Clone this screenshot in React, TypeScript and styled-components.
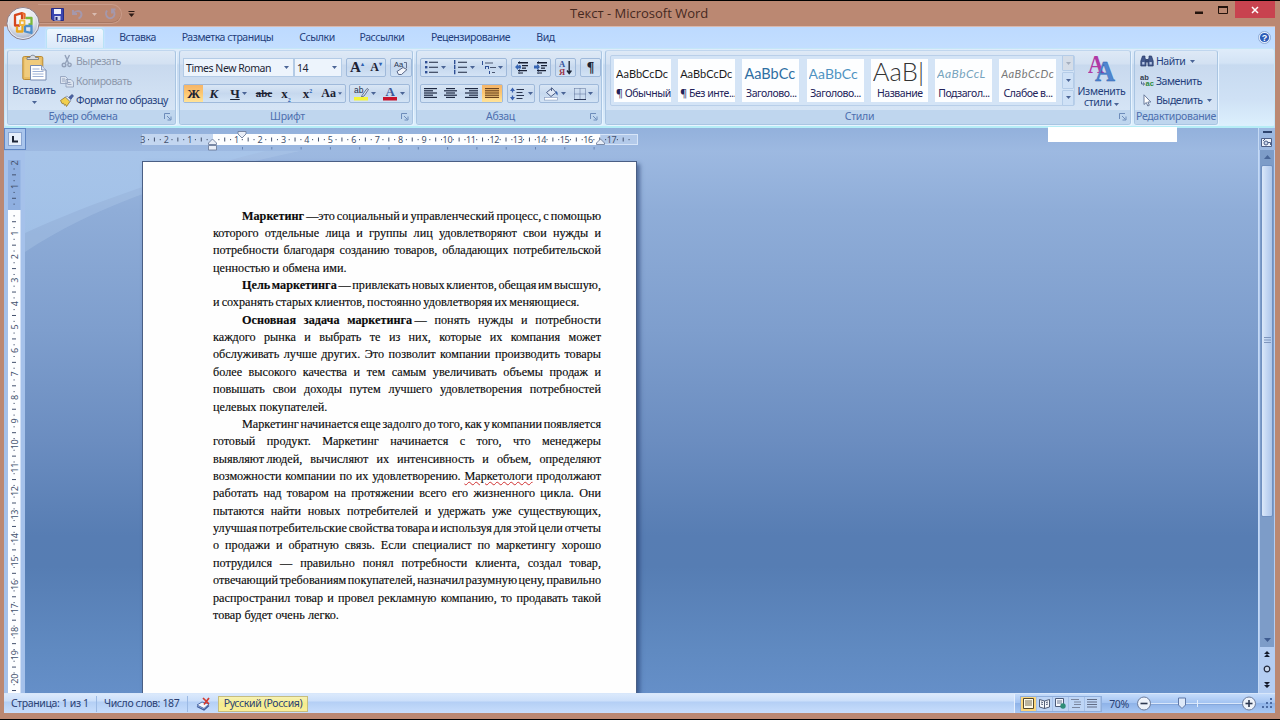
import React from 'react';
import styled, { createGlobalStyle, css } from 'styled-components';

const Global = createGlobalStyle`
  * { box-sizing: border-box; }
  html, body { margin: 0; padding: 0; overflow: hidden; background: #000; }
  body { font-family: "Noto Sans", "Open Sans", sans-serif; font-size: 10.5px; letter-spacing: -0.45px; color: #24407c; }
  svg { letter-spacing: 0; }
`;

/* ---------- window ---------- */
const Window = styled.div`
  position: relative;
  width: 1280px;
  height: 720px;
  display: flex;
  flex-direction: column;
  background: #bb8872;
  border-top: 1px solid #000;
  border-bottom: 1px solid #000;
  overflow: hidden;
`;
const TitleBar = styled.header`
  flex: none;
  height: 25px;
  display: flex;
  align-items: flex-start;
  padding-left: 38px;
`;
const QuickAccess = styled.div`
  width: 84px;
  height: 20px;
  margin-top: 3px;
  border: 1px solid #c99b89;
  border-left: none;
  border-radius: 0 10px 10px 0;
  box-shadow: inset 0 -1px 0 #a87763;
  display: flex;
  align-items: center;
  padding-left: 13px;
  gap: 8px;
`;
const TitleText = styled.h1`
  flex: 1;
  margin: 0;
  padding-left: 435px;
  font-family: "Open Sans", sans-serif;
  font-size: 13px;
  letter-spacing: 0;
  line-height: 24px;
  font-weight: 400;
  color: #46291f;
  white-space: nowrap;
`;
const Caption = styled.div`
  display: flex;
  height: 17px;
  padding-right: 5px;
`;
const CaptionButton = styled.button<{ $close?: boolean }>`
  border: 0;
  padding: 0;
  width: ${p => (p.$close ? 40 : 24)}px;
  height: 17px;
  background: ${p => (p.$close ? '#c8434f' : 'transparent')};
  display: flex;
  align-items: center;
  justify-content: center;
`;
const OfficeButton = styled.div`
  position: absolute;
  left: 6px;
  top: 5px;
  width: 34px;
  height: 34px;
`;
const Client = styled.div`
  flex: none;
  height: 687px;
  margin: 0 5px 0 4px;
  display: flex;
  flex-direction: column;
  background: #bfdbff;
`;

/* ---------- tabs ---------- */
const Tabs = styled.nav`
  flex: none;
  height: 22px;
  display: flex;
  align-items: flex-end;
  padding-left: 42px;
  border-top: 1px solid #d9b9ae;
  background: linear-gradient(#bddaff, #c3deff);
`;
const Tab = styled.div<{ $w: number; $active?: boolean }>`
  width: ${p => p.$w}px;
  height: 20px;
  line-height: 19px;
  text-align: center;
  white-space: nowrap;
  ${p => p.$active && css`
    border: 1px solid #b9e3f6;
    border-bottom: 0;
    border-radius: 3px 3px 0 0;
    background: linear-gradient(#eff7ff, #dbe9f9);
    box-shadow: 0 0 2px #d8f4ff;
    line-height: 18px;
  `}
`;
const HelpSlot = styled.div`
  margin-left: auto;
  padding: 0 4px 4px 0;
  line-height: 0;
`;

/* ---------- ribbon ---------- */
const Ribbon = styled.div`
  flex: none;
  height: 80px;
  display: flex;
  gap: 3px;
  padding: 1px 3px 3px 2px;
  border: 1px solid #c5e6f8;
  border-bottom: 2px solid #b5edf6;
  border-radius: 3px;
  background: linear-gradient(#dfecfa 0, #d3e3f5 14px, #c7daf0 16px, #cfe1f5 50px, #dcf0fd 100%);
`;
const Group = styled.section<{ $w: number }>`
  flex: none;
  width: ${p => p.$w}px;
  height: 75px;
  display: flex;
  flex-direction: column;
  border: 1px solid #a9c5e2;
  border-top-color: #c0d6ee;
  border-radius: 3px;
  overflow: hidden;
  box-shadow: 1px 1px 0 #e8f4ff;
  background: linear-gradient(#dee9f6 0, #d3e1f2 13px, #c8d9ee 14px, #d5e4f5 58px);
`;
const GroupBody = styled.div<{ $pad?: string; $col?: boolean; $gap?: number }>`
  flex: 1;
  display: flex;
  flex-direction: ${p => (p.$col ? 'column' : 'row')};
  gap: ${p => p.$gap ?? 0}px;
  padding: ${p => p.$pad ?? '0'};
`;
const GroupCaption = styled.footer<{ $end?: boolean }>`
  flex: none;
  position: relative;
  height: 14px;
  line-height: 13px;
  text-align: center;
  padding-right: ${p => (p.$end ? 0 : 17)}px;
  white-space: nowrap;
  letter-spacing: -0.3px;
  color: #4d6fae;
  background: #bfd6ee;
  svg { position: absolute; right: 3px; top: 3px; }
`;
const BigButton = styled.div<{ $w: number }>`
  flex: none;
  width: ${p => p.$w}px;
  display: flex;
  flex-direction: column;
  align-items: center;
  line-height: 11px;
  white-space: nowrap;
  letter-spacing: -0.3px;
`;
const BigLabel = styled.div`
  margin-top: 4px;
`;
const BigArrow = styled.div`
  margin-top: 4px;
  line-height: 0;
`;
const Commands = styled.div`
  display: flex;
  flex-direction: column;
  gap: 5.5px;
`;
const Command = styled.div<{ $off?: boolean }>`
  display: flex;
  align-items: center;
  gap: 2px;
  height: 14px;
  line-height: 14px;
  white-space: nowrap;
  color: ${p => (p.$off ? '#8d99ac' : '#24407c')};
  svg { flex: none; }
`;
const ToolRow = styled.div<{ $gap?: number }>`
  display: flex;
  gap: ${p => p.$gap ?? 4}px;
  height: 19px;
`;
const Combo = styled.div<{ $w: number }>`
  width: ${p => p.$w}px;
  height: 19px;
  display: flex;
  align-items: center;
  justify-content: space-between;
  padding: 0 4px 0 2px;
  border: 1px solid #b3cbe6;
  background: #edf4fc;
  color: #1c2434;
  white-space: nowrap;
`;
const Tools = styled.div<{ $w: number }>`
  width: ${p => p.$w}px;
  height: 19px;
  display: flex;
  align-items: center;
  justify-content: space-around;
  border: 1px solid #9fb9da;
  border-radius: 2px;
  background: linear-gradient(#d9e6f5, #c6d8ee 50%, #d3e3f5);
`;
const Tool = styled.div<{ $w: number; $on?: boolean }>`
  width: ${p => p.$w}px;
  height: 17px;
  display: flex;
  align-items: center;
  justify-content: center;
  gap: 2px;
  background: ${p => (p.$on ? 'linear-gradient(#f5b56a, #fcc56f 45%, #ffe398)' : 'none')};
`;
const Glyph = styled.span<{ $i?: boolean; $u?: boolean; $s?: boolean; $size?: number }>`
  font-family: "Liberation Serif", serif;
  font-weight: 700;
  font-size: ${p => p.$size ?? 13}px;
  letter-spacing: 0;
  line-height: 15px;
  color: #1c2233;
  font-style: ${p => (p.$i ? 'italic' : 'normal')};
  text-decoration: ${p => (p.$u ? 'underline' : p.$s ? 'line-through' : 'none')};
  sub, sup { font-size: 6px; line-height: 0; color: #2e5fb0; }
`;

/* ---------- style gallery ---------- */
const Gallery = styled.div`
  flex: none;
  width: 465px;
  height: 51px;
  display: flex;
  gap: 7.2px;
  padding: 3px 0 0 3px;
  border: 1px solid #b9cfe9;
  border-radius: 2px;
  background: #d4e4f6;
`;
const Card = styled.div`
  flex: none;
  width: 57px;
  height: 43px;
  display: flex;
  flex-direction: column;
  justify-content: space-between;
  background: #fdfeff;
  overflow: hidden;
  padding: 0 1px 1px 2px;
`;
const Sample = styled.div<{ $c?: string; $size?: number; $i?: boolean; $light?: boolean }>`
  height: 28px;
  line-height: ${p => (p.$light ? 24 : 29)}px;
  overflow: hidden;
  white-space: nowrap;
  font-family: Lato, sans-serif;
  font-size: ${p => p.$size ?? 11}px;
  font-style: ${p => (p.$i ? 'italic' : 'normal')};
  font-weight: ${p => (p.$light ? 300 : 400)};
  color: ${p => p.$c ?? '#1b1b1b'};
  letter-spacing: ${p => (p.$i ? 0.5 : 0)}px;
`;
const CardName = styled.div`
  height: 14px;
  line-height: 13px;
  text-align: center;
  white-space: nowrap;
  color: #23235a;
`;
const GalleryScroll = styled.div`
  flex: none;
  width: 12px;
  height: 51px;
  margin: -4px 0 0 -1px;
  display: flex;
  flex-direction: column;
  gap: 1px;
`;
const ScrollCell = styled.div<{ $off?: boolean }>`
  flex: 1;
  display: flex;
  align-items: center;
  justify-content: center;
  border: 1px solid #b4cce8;
  border-radius: 1px;
  background: ${p => (p.$off ? '#d5dde8' : '#cfe1f6')};
`;

/* ---------- workspace ---------- */
const Work = styled.div`
  position: relative;
  flex: 1;
  min-height: 0;
  display: flex;
`;
const Canvas = styled.div`
  flex: 1;
  display: flex;
  flex-direction: column;
  overflow: hidden;
`;
const RulerRow = styled.div`
  flex: none;
  height: 23px;
  display: flex;
  background: linear-gradient(#93b1dc, #9db9e1);
`;
const TabStop = styled.div`
  width: 22px;
  height: 22px;
  margin-right: 116px;
  display: flex;
  align-items: center;
  justify-content: center;
  border: 1px solid #5f86c4;
  background: #a9c5ec;
`;
const Desk = styled.div`
  flex: 1;
  min-height: 0;
  display: flex;
  background: linear-gradient(#9db9e1 0, #8fadd8 60px, #7e9ecd 180px, #6b8dc0 290px, #577db3 385px, #567db3 415px, #608ac1 500px, #658fc8 542px);
`;
const VRuler = styled.div`
  flex: none;
  width: 21px;
  background: #a5c1ea;
`;
const Stage = styled.div`
  position: relative;
  flex: 1;
  padding: 10px 0 0 117px;
`;
const Swoosh = styled.svg`
  position: absolute;
  left: 0;
  top: 0;
`;
const Page = styled.article`
  position: relative;
  width: 495px;
  height: 540px;
  padding: 45.6px 35px 0 70px;
  border: 1px solid #4a5f85;
  background: #fefefe;
  box-shadow: 3px 3px 4px rgba(35, 60, 110, 0.6);
  font-family: "Liberation Serif", "Times New Roman", serif;
  font-size: 12.2px;
  letter-spacing: 0;
  color: #0a0a0a;
`;
const Line = styled.p<{ $indent?: boolean; $end?: boolean; $ws?: number }>`
  margin: 0;
  height: 17.37px;
  line-height: 17.37px;
  white-space: nowrap;
  padding-left: ${p => (p.$indent ? 29 : 0)}px;
  text-align: left;
  text-align-last: ${p => (p.$end ? 'left' : 'justify')};
  word-spacing: ${p => p.$ws ?? 0}px;
  -webkit-text-stroke: 0.15px #0a0a0a;
`;
const Misspelt = styled.span`
  text-decoration: underline wavy #d03030 0.7px;
  text-underline-offset: 1px;
`;
const Scrollbar = styled.aside`
  flex: none;
  width: 17px;
  display: flex;
  flex-direction: column;
  align-items: center;
  background: #b4cdf2;
  border-left: 1px solid #c5daf5;
`;
const ScrollTop = styled.div`
  flex: none;
  height: 22px;
  width: 16px;
  display: flex;
  flex-direction: column;
  align-items: center;
  gap: 3px;
  padding-top: 3px;
  background: #9db9e1;
`;
const Track = styled.div`
  flex: none;
  width: 14px;
  height: 497px;
  display: flex;
  flex-direction: column;
  align-items: center;
  justify-content: space-between;
  padding: 5px 0 5px;
  background: #7d9cc8;
`;
const Thumb = styled.div`
  width: 12px;
  height: 352px;
  margin-bottom: 116px;
  display: flex;
  align-items: center;
  justify-content: center;
  border: 1px solid #7090c0;
  border-radius: 2px;
  background: linear-gradient(90deg, #dbe8f9, #c3d6f2 50%, #aec6ea);
`;
const Browse = styled.div`
  flex: 1;
  width: 16px;
  display: flex;
  flex-direction: column;
  align-items: center;
  justify-content: space-around;
  padding-bottom: 1px;
`;
const Patch = styled.div`
  position: absolute;
  left: 1044px;
  top: -1px;
  width: 129px;
  height: 15px;
  background: #fff;
`;

/* ---------- status bar ---------- */
const Status = styled.footer`
  flex: none;
  height: 20px;
  display: flex;
  align-items: center;
  color: #2a3f73;
  letter-spacing: -0.38px;
  border-top: 1px solid #d8e7fb;
  background: linear-gradient(#dbe9fc 0, #cbdffa 7px, #b4cff5 8px, #c8defc 100%);
`;
const StatusCell = styled.div<{ $w: number }>`
  width: ${p => p.$w}px;
  height: 16px;
  line-height: 15px;
  padding-left: 7px;
  white-space: nowrap;
  border-right: 1px solid #9bb9e4;
`;
const ProofSlot = styled.div`
  width: 30px;
  line-height: 0;
  text-align: center;
`;
const Language = styled.div`
  width: 90px;
  height: 16px;
  line-height: 13px;
  text-align: center;
  white-space: nowrap;
  border: 1px solid #c6bd7e;
  background: linear-gradient(#f7f2b4, #f5ec8c 50%, #fbf09a);
`;
const StatusRight = styled.div`
  margin-left: auto;
  width: 261px;
  height: 19px;
  display: flex;
  align-items: center;
  border-left: 1px solid #e5effd;
  background: linear-gradient(#c5dcfb, #a4c4f2 45%, #8fb3e8 50%, #a9c9f5);
`;
const Views = styled.div`
  width: 82px;
  height: 16px;
  margin-left: 5px;
  display: flex;
  border: 1px solid #8faedb;
  background: #bed5f5;
`;
const View = styled.div<{ $on?: boolean }>`
  flex: 1;
  display: flex;
  align-items: center;
  justify-content: center;
  border-right: 1px solid #a6c1e8;
  background: ${p => (p.$on ? '#fbd67c' : 'none')};
`;
const Zoom = styled.span`
  width: 34px;
  text-align: center;
`;
const QatMore = styled.svg`
  margin: 10px 0 0 6px;
`;
const SizeGrip = styled.svg`
  margin-left: 4px;
`;

/* ---------- small drawings ---------- */
const Caret = ({ c = '#4a6496', w = 5 }: { c?: string; w?: number }) => (
  <svg width={w} height="3" viewBox="0 0 5 3"><path d="M0 0h5L2.5 3z" fill={c} /></svg>
);
const Launcher = () => (
  <svg width="8" height="8" viewBox="0 0 8 8" fill="none" stroke="#6d8cba">
    <path d="M.5 6V.5H6M3 3l3.5 3.5M7 3.5V7H3.5" />
  </svg>
);
const Lines = ({ rows, c = '#1e2942' }: { rows: [number, number][]; c?: string }) => (
  <svg width="14" height="13" viewBox="0 0 14 13">
    {rows.map(([x, w], i) => <rect key={i} x={x} y={1 + i * 2.2} width={w} height="1.2" fill={c} />)}
  </svg>
);
const ListIcon = ({ kind }: { kind: 'dot' | 'num' | 'multi' }) => (
  <svg width="15" height="15" viewBox="0 0 15 15" fill="#2f4f94">
    {kind === 'multi' ? (
      <>
        <path d="M1 1h1v4H1zM4 6h3v1H4zM4 6h1v3H4zM7 6h1v3H7zM8 11h1v3H8z" />
        <path d="M4 2.5h8v1H4zM9 7h6v1H9zM11 12h3v1h-3z" fill="#4a5670" />
      </>
    ) : (
      [2, 7, 12].map(y => (
        <g key={y}>
          {kind === 'dot' ? <rect x="1" y={y - 1} width="2.4" height="2.4" /> : <path d={`M1 ${y - 2}h1.4v4.2h-1.4z`} />}
          <rect x="5" y={y - 0.3} width="9" height="1.2" fill="#3b465e" />
        </g>
      ))
    )}
  </svg>
);
const IndentIcon = ({ right }: { right?: boolean }) => (
  <svg width="15" height="14" viewBox="0 0 15 14" fill="#171f33">
    <path d="M4 1h10v1.500H4zM8 4h6v1.300H8zM8 6.500h4v1.300H8zM4 9h9v1.300H4zM4 11.500h5v1H4z" />
    <path d={right ? 'M1 4.500h3V3l3 3-3 3V7.400H1z' : 'M7 4.500H4V3L1 6l3 3V7.400h3z'} fill="#3766b5" />
    <path d="M5.500 0v14" stroke="#3c4f78" strokeDasharray="1 1" strokeWidth=".7" />
  </svg>
);
const OfficeLogo = () => (
  <svg width="34" height="34" viewBox="0 0 34 34">
    <defs>
      <radialGradient id="orb" cx=".45" cy=".3" r=".75">
        <stop offset="0" stopColor="#fff" /><stop offset=".55" stopColor="#e3e6ee" /><stop offset="1" stopColor="#9aa6c0" />
      </radialGradient>
    </defs>
    <circle cx="17" cy="17.500" r="16" fill="url(#orb)" stroke="#8b7f8c" />
    <circle cx="17" cy="17.500" r="15" fill="none" stroke="#f4f6fb" strokeWidth=".8" />
    <g fill="none" strokeWidth="2.300" strokeLinejoin="round">
      <path d="M14 19.500H9V9.200l7-2v6" stroke="#d5461c" />
      <path d="M16 7.200l2.500.8v5" stroke="#e8692b" />
      <path d="M19.500 12h6v6.500h-3" stroke="#7db83a" />
      <path d="M11 20.500v5h5.500v-6" stroke="#e9a81e" />
      <path d="M19 20h6.500v7l-6.500-1.500z" stroke="#4d8ecb" />
      <path d="M14 14.500h4.500v4.500H14z" stroke="#f0b43c" strokeWidth="1.800" />
    </g>
  </svg>
);
const SaveIcon = () => (
  <svg width="13" height="13" viewBox="0 0 13 13">
    <path d="M.5 .5h12v12H2L.5 11z" fill="#3a45b0" stroke="#252c86" />
    <rect x="3" y="1" width="7" height="5" fill="#f0f2fb" />
    <rect x="3.500" y="8" width="6" height="4.500" fill="#d6daf0" />
    <rect x="4.500" y="9" width="2" height="3" fill="#20256b" />
  </svg>
);
const UndoIcon = () => (
  <svg width="12" height="11" viewBox="0 0 12 11" fill="none" stroke="#a598ac" strokeWidth="1.900">
    <path d="M1 1v4h4M1.500 4.500C4 1 9 1.500 9.500 5c.2 2-1 3.500-3 4.500" />
  </svg>
);
const RedoIcon = () => (
  <svg width="11" height="12" viewBox="0 0 11 12" fill="none" stroke="#a598ac" strokeWidth="1.900">
    <path d="M2 2.500C.500 5 .8 8 3 9.500s6 .5 6.500-3c.2-2-.5-3-2-4.500M7 5.500V1.500h3.500" />
  </svg>
);
const PasteIcon = () => (
  <svg width="25" height="27" viewBox="0 0 25 27">
    <rect x=".8" y="2.500" width="20" height="23" rx="1.500" fill="#e9bd62" stroke="#b98a35" />
    <rect x="2.500" y="5" width="16" height="18" fill="#f0cb7c" />
    <path d="M5 5.500V3.500h3C8 .5 13.500.5 13.500 3.500h3v2z" fill="#d7dbe2" stroke="#6b7383" strokeWidth=".8" />
    <path d="M8.500 11.500h11l4.500 4.500v10H8.500z" fill="#fff" stroke="#7589b0" />
    <path d="M19.500 11.500V16H24" fill="#d5e0f3" stroke="#7589b0" strokeWidth=".8" />
    <path d="M10.500 15h7M10.500 17.500h11M10.500 20h11M10.500 22.500h11" stroke="#9db1d6" />
  </svg>
);
const CutIcon = () => (
  <svg width="14" height="14" viewBox="0 0 14 14" fill="none" stroke="#93a1b9" strokeWidth="1.400">
    <path d="M5 1l3.500 8M9.500 1L5.500 9" /><circle cx="4" cy="11" r="1.800" /><circle cx="9.500" cy="10.800" r="1.700" />
  </svg>
);
const CopyIcon = () => (
  <svg width="14" height="14" viewBox="0 0 14 14" fill="#dbe3ef" stroke="#94a3bd" strokeWidth=".9">
    <path d="M.5 2.500h5l2 2v5h-7zM6 5.500h5l2.500 2.500v5H6z" /><path d="M2 5h3M2 7h3M7.500 8.500h3M7.500 10.500h4" />
  </svg>
);
const BrushIcon = () => (
  <svg width="14" height="13" viewBox="0 0 14 13">
    <path d="M7.500 4.500L12 .5l1.500 1.300L10 6.500z" fill="#4b64a8" stroke="#2c3d72" strokeWidth=".6" />
    <path d="M.5 6.500l5-3.500 4.500 4.500-3.500 5-1-2-1 .8-1-2-1.300.4z" fill="#f1cf4d" stroke="#8d7432" strokeWidth=".8" />
    <path d="M5.500 3l4.500 4.500 1-1.500-4-4z" fill="#e8edf8" stroke="#67779c" strokeWidth=".6" />
  </svg>
);
const EraserIcon = () => (
  <svg width="16" height="16" viewBox="0 0 16 16">
    <text x="1" y="7" fontSize="7.500" fontFamily="Liberation Sans" fill="#27334f">Aa</text>
    <path d="M4 11.500l6-4 4 2-5.500 5H5.500z" fill="#f4f6fb" stroke="#4b587a" strokeWidth=".9" />
    <path d="M11 2.500h2.500V8" fill="none" stroke="#4b587a" strokeWidth=".8" />
  </svg>
);
const HighlightIcon = () => (
  <svg width="15" height="15" viewBox="0 0 15 15">
    <text x="0" y="7" fontSize="8.500" fontFamily="Liberation Sans" fill="#27334f">ab</text>
    <path d="M8 9.500l5-7 1.500 1L10 10l-2.500 1z" fill="#dfe6f3" stroke="#4a5877" strokeWidth=".8" />
    <rect x="0" y="11" width="14" height="3.500" fill="#f5f53a" />
  </svg>
);
const FontColorIcon = () => (
  <svg width="15" height="15" viewBox="0 0 15 15" overflow="visible">
    <text x="2.500" y="10" fontSize="13" fontWeight="700" fontFamily="Liberation Serif" fill="#3c5898">A</text>
    <rect x="0" y="11" width="14" height="3.500" fill="#c8142c" />
  </svg>
);
const SortIcon = () => (
  <svg width="14" height="15" viewBox="0 0 14 15">
    <text x="0" y="7" fontSize="8.500" fontWeight="700" fontFamily="Liberation Serif" fill="#35559c">А</text>
    <text x="0" y="14.500" fontSize="8.500" fontWeight="700" fontFamily="Liberation Serif" fill="#9c3447">Я</text>
    <path d="M10.200 1v12M8 10.500l2.200 3 2.200-3" fill="none" stroke="#1e2738" strokeWidth="1.400" />
  </svg>
);
const SpacingIcon = () => (
  <svg width="15" height="14" viewBox="0 0 15 14">
    <path d="M2.500 2v3.500M2.500 8.500V12" stroke="#3a62b0" strokeWidth="1.300" />
    <path d="M0 4l2.500-3.500L5 4zM0 10l2.500 3.500L5 10z" fill="#3a62b0" />
    <path d="M6.500 2.500H14M6.500 5.500h6M6.500 8.500H14M6.500 11.500h6" stroke="#2b3650" strokeWidth="1.200" />
  </svg>
);
const BucketIcon = () => (
  <svg width="15" height="15" viewBox="0 0 15 15">
    <path d="M2.500 6.500L8 2l4 4.500L7 10.500z" fill="#dfe8f6" stroke="#4b5d86" />
    <path d="M7.500 5V1.500" stroke="#4b5d86" /><path d="M11.500 5c2 .5 2.500 2 2 4.500-1-1-2-2-2-4.500z" fill="#3761ae" />
    <rect x=".5" y="11.500" width="13" height="2.600" fill="#fff" stroke="#8fa2c4" strokeWidth=".7" />
  </svg>
);
const BordersIcon = () => (
  <svg width="12" height="12" viewBox="0 0 12 12" fill="none" stroke="#5d7099">
    <path d="M.5 .5h11v11M.5 .5v11M6 .5v11M.5 6h11" strokeDasharray="1 1" /><path d="M0 11.500h12" stroke="#2f3c5c" />
  </svg>
);
const StylesIcon = () => (
  <svg width="28" height="27" viewBox="0 0 28 27" fontFamily="Liberation Serif" fontWeight="700">
    <text x="0" y="17.500" fontSize="25" fill="#b03aa4" textLength="16" lengthAdjust="spacingAndGlyphs">A</text>
    <text x="7" y="25.500" fontSize="29" fill="#4f86d0" stroke="#2f62ae" strokeWidth=".4" textLength="20" lengthAdjust="spacingAndGlyphs">A</text>
  </svg>
);
const FindIcon = () => (
  <svg width="14" height="12" viewBox="0 0 14 12" fill="#42588c" stroke="#283a68" strokeWidth=".7">
    <path d="M2.500 1h2.500v2l1 2v6H.8V6zM9 1h2.500l1.700 5v5H8V5l1-2z" /><path d="M6 4.500h2v2.500H6z" />
    <path d="M2.200 7h2.300v2.500H2.200zM9.500 7h2.300v2.500H9.500z" fill="#b8c8e6" stroke="none" />
  </svg>
);
const ReplaceIcon = () => (
  <svg width="14" height="13" viewBox="0 0 14 13" fontFamily="Liberation Sans" fontWeight="700">
    <text x="0" y="6" fontSize="7.500" fill="#333c50">ab</text>
    <text x="5.500" y="12" fontSize="7.500" fill="#2c8a3c">ac</text>
    <path d="M1.500 7.500v2.500H4M3 8.500L4.700 10 3 11.500" fill="none" stroke="#37507f" strokeWidth=".8" />
  </svg>
);
const SelectIcon = () => (
  <svg width="14" height="13" viewBox="0 0 14 13">
    <path d="M4 .8v9.700l2.300-2 1.500 3.500 1.500-.7L7.800 8h3z" fill="#fff" stroke="#5f6f92" strokeWidth=".9" />
  </svg>
);
const HelpIcon = () => (
  <svg width="13" height="13" viewBox="0 0 13 13">
    <circle cx="6.500" cy="6.500" r="6" fill="#eaf2fd" stroke="#7d9ccc" strokeWidth=".8" />
    <circle cx="6.500" cy="6.500" r="4.600" fill="#2c5cb8" />
    <text x="6.500" y="9.600" textAnchor="middle" fontSize="9" fontWeight="700" fontFamily="Liberation Sans" fill="#fff">?</text>
  </svg>
);

/* Horizontal ruler, one centimetre is 23.44px */
const CM = 23.44;
const HorizontalRuler = () => {
  const marks: React.ReactNode[] = [];
  for (let q = -12; q <= 71; q++) {
    const x = 71 + (q * CM) / 4;
    if (q === 0 || x < 0 || x > 494) continue;
    if (q % 4 === 0)
      marks.push(<text key={q} x={x} y="15" textAnchor="middle" fontSize="9" letterSpacing="-.3">{Math.abs(q / 4)}</text>);
    else if (q % 2 === 0) marks.push(<rect key={q} x={x - 0.5} y="9.500" width="1" height="4" />);
    else marks.push(<rect key={q} x={x - 0.5} y="11" width="1" height="1.200" />);
  }
  return (
    <svg width="500" height="23" viewBox="0 0 500 23" fill="#44526e" overflow="visible">
      <rect x="0" y="6" width="496" height="11" fill="#c3d6f0" />
      <rect x="458" y="6.500" width="37.500" height="10" fill="#b3caea" stroke="#d7e5f8" />
      <rect x="71" y="6" width="387" height="11" fill="#fdfeff" />
      {marks}
      {Array.from({ length: 13 }, (_, i) => (
        <rect key={i} x={100 + i * 29.300} y="19" width="1" height="2.500" fill="#6784b3" />
      ))}
      <g fill="#e9eef7" stroke="#6f7f9c" strokeWidth=".9">
        <path d="M96 3.500h8v2.500l-4 4-4-4z" />
        <path d="M70.500 11l4 4v1.500h-8V15zM66.500 17.500h8v4.500h-8z" />
        <path d="M458.500 11l4 4v1.500h-8V15z" />
      </g>
    </svg>
  );
};
const VerticalRuler = () => {
  const marks: React.ReactNode[] = [];
  for (let q = -8; q <= 82; q++) {
    const y = 59 + (q * CM) / 4;
    if (q === 0) continue;
    if (q % 4 === 0)
      marks.push(
        <text key={q} transform={`translate(13.500 ${y}) rotate(-90)`} textAnchor="middle" fontSize="9" letterSpacing="-.3">{Math.abs(q / 4)}</text>
      );
    else if (q % 2 === 0) marks.push(<rect key={q} x="8" y={y - 0.5} width="4" height="1" />);
    else marks.push(<rect key={q} x="9.500" y={y - 0.5} width="1.200" height="1" />);
  }
  return (
    <svg width="21" height="542" viewBox="0 0 21 542" fill="#44526e">
      <rect x="4" y="9" width="12.500" height="50" fill="#8fafe0" />
      <rect x="4" y="59" width="12.500" height="483" fill="#fdfeff" />
      {marks}
    </svg>
  );
};

const ribbonTabs: [string, number][] = [
  ['Вставка', 67], ['Разметка страницы', 113], ['Ссылки', 66],
  ['Рассылки', 64], ['Рецензирование', 113], ['Вид', 37],
];

export default function App() {
  return (
    <>
      <Global />
      <Window>
        <TitleBar>
          <QuickAccess>
            <SaveIcon /><UndoIcon /><Caret c="#d9bbb0" /><RedoIcon />
          </QuickAccess>
          <QatMore width="7" height="7" viewBox="0 0 7 7">
            <path d="M0.500 .5h6" stroke="#2e1c17" /><path d="M.5 2.500h6L3.500 6z" fill="#2e1c17" />
          </QatMore>
          <TitleText>Текст - Microsoft Word</TitleText>
          <Caption>
            <CaptionButton><svg width="8" height="8"><rect y="5.500" width="8" height="2.500" fill="#24130c" /></svg></CaptionButton>
            <CaptionButton><svg width="10" height="8"><path d="M.5 1h9v6.500h-9z" fill="none" stroke="#24130c" /><rect width="10" height="2" fill="#24130c" /></svg></CaptionButton>
            <CaptionButton $close><svg width="8" height="8"><path d="M1 1l6 6M7 1L1 7" stroke="#fff" strokeWidth="1.500" /></svg></CaptionButton>
          </Caption>
        </TitleBar>

        <Client>
          <Tabs>
            <Tab $w={58} $active>Главная</Tab>
            {ribbonTabs.map(([name, w]) => <Tab key={name} $w={w}>{name}</Tab>)}
            <HelpSlot><HelpIcon /></HelpSlot>
          </Tabs>

          <Ribbon>
            <Group $w={169}>
              <GroupBody $pad="3px 0 0 0">
                <BigButton $w={52}>
                  <PasteIcon />
                  <BigLabel>Вставить</BigLabel>
                  <BigArrow><Caret /></BigArrow>
                </BigButton>
                <Commands>
                  <Command $off><CutIcon />Вырезать</Command>
                  <Command $off><CopyIcon />Копировать</Command>
                  <Command><BrushIcon />Формат по образцу</Command>
                </Commands>
              </GroupBody>
              <GroupCaption>Буфер обмена<Launcher /></GroupCaption>
            </Group>

            <Group $w={234}>
              <GroupBody $col $gap={7} $pad="7px 0 0 3px">
                <ToolRow>
                  <ToolRow $gap={0}>
                    <Combo $w={111}>Times New Roman<Caret /></Combo>
                    <Combo $w={48}>14<Caret /></Combo>
                  </ToolRow>
                  <Tools $w={40}>
                    <Glyph $size={15}>A<sup>▴</sup></Glyph><Glyph $size={12}>A<sup>▾</sup></Glyph>
                  </Tools>
                  <Tools $w={22}><EraserIcon /></Tools>
                </ToolRow>
                <ToolRow $gap={3}>
                  <Tools $w={163}>
                    <Tool $w={19} $on><Glyph>Ж</Glyph></Tool>
                    <Tool $w={20}><Glyph $i>К</Glyph></Tool>
                    <Tool $w={28}><Glyph $u>Ч</Glyph><Caret /></Tool>
                    <Tool $w={22}><Glyph $s $size={11}>abc</Glyph></Tool>
                    <Tool $w={21}><Glyph>x<sub>2</sub></Glyph></Tool>
                    <Tool $w={21}><Glyph>x<sup>2</sup></Glyph></Tool>
                    <Tool $w={26}><Glyph $size={12}>Aa</Glyph><Caret w={4} /></Tool>
                  </Tools>
                  <Tools $w={61}>
                    <Tool $w={29}><HighlightIcon /><Caret /></Tool>
                    <Tool $w={29}><FontColorIcon /><Caret /></Tool>
                  </Tools>
                </ToolRow>
              </GroupBody>
              <GroupCaption>Шрифт<Launcher /></GroupCaption>
            </Group>

            <Group $w={186}>
              <GroupBody $col $gap={7} $pad="7px 0 0 3px">
                <ToolRow>
                  <Tools $w={88}>
                    <Tool $w={28}><ListIcon kind="dot" /><Caret /></Tool>
                    <Tool $w={28}><ListIcon kind="num" /><Caret /></Tool>
                    <Tool $w={28}><ListIcon kind="multi" /><Caret /></Tool>
                  </Tools>
                  <Tools $w={40}><IndentIcon /><IndentIcon right /></Tools>
                  <Tools $w={21}><SortIcon /></Tools>
                  <Tools $w={21}><Glyph $size={14}>¶</Glyph></Tools>
                </ToolRow>
                <ToolRow>
                  <Tools $w={83}>
                    <Tool $w={20}><Lines rows={[[0, 13], [0, 9], [0, 13], [0, 9], [0, 13]]} /></Tool>
                    <Tool $w={20}><Lines rows={[[2, 9], [0, 13], [2, 9], [0, 13], [2, 9]]} /></Tool>
                    <Tool $w={20}><Lines rows={[[0, 13], [4, 9], [0, 13], [4, 9], [0, 13]]} /></Tool>
                    <Tool $w={20} $on><Lines c="#6b4420" rows={[[0, 14], [0, 14], [0, 14], [0, 14], [0, 14]]} /></Tool>
                  </Tools>
                  <Tools $w={28}><SpacingIcon /><Caret /></Tools>
                  <Tools $w={60}>
                    <Tool $w={29}><BucketIcon /><Caret /></Tool>
                    <Tool $w={29}><BordersIcon /><Caret /></Tool>
                  </Tools>
                </ToolRow>
              </GroupBody>
              <GroupCaption>Абзац<Launcher /></GroupCaption>
            </Group>

            <Group $w={526}>
              <GroupBody $pad="4px 0 0 4px">
                <Gallery>
                  <Card><Sample>АаBbCcDc</Sample><CardName>¶ Обычный</CardName></Card>
                  <Card><Sample>АаBbCcDc</Sample><CardName>¶ Без инте...</CardName></Card>
                  <Card><Sample $c="#2f6fa3" $size={14.5}>АаBbCc</Sample><CardName>Заголово...</CardName></Card>
                  <Card><Sample $c="#4f93c2" $size={14}>АаBbCc</Sample><CardName>Заголово...</CardName></Card>
                  <Card><Sample $c="#333" $size={25.5} $light>АаВ|</Sample><CardName>Название</CardName></Card>
                  <Card><Sample $c="#76a3bd" $size={12} $i>АаBbCcL</Sample><CardName>Подзагол...</CardName></Card>
                  <Card><Sample $c="#777" $size={11} $i>АаBbCcDc</Sample><CardName>Слабое в...</CardName></Card>
                  <GalleryScroll>
                    <ScrollCell $off><Caret c="#a5afbf" /></ScrollCell>
                    <ScrollCell><Caret /></ScrollCell>
                    <ScrollCell><Caret /></ScrollCell>
                  </GalleryScroll>
                </Gallery>
                <BigButton $w={53}>
                  <StylesIcon />
                  <BigLabel>Изменить</BigLabel>
                  <div>стили <Caret /></div>
                </BigButton>
              </GroupBody>
              <GroupCaption>Стили<Launcher /></GroupCaption>
            </Group>

            <Group $w={84}>
              <GroupBody $pad="3px 0 0 5px">
                <Commands>
                  <Command><FindIcon />Найти&nbsp;<Caret /></Command>
                  <Command><ReplaceIcon />Заменить</Command>
                  <Command><SelectIcon />Выделить&nbsp;<Caret /></Command>
                </Commands>
              </GroupBody>
              <GroupCaption $end>Редактирование</GroupCaption>
            </Group>
          </Ribbon>

          <Work>
            <Canvas>
              <RulerRow>
                <TabStop>
                  <svg width="14" height="14"><rect x=".5" y=".5" width="13" height="13" fill="#e6effb" stroke="#8ba6d2" /><path d="M5 4v5.500h5" fill="none" stroke="#1c2436" strokeWidth="2" /></svg>
                </TabStop>
                <HorizontalRuler />
              </RulerRow>
              <Desk>
                <VRuler><VerticalRuler /></VRuler>
                <Stage>
                  <Swoosh width="640" height="542" viewBox="0 0 640 542">
                    <defs>
                      <linearGradient id="sw" x1="0" y1="0" x2="0" y2="1">
                        <stop offset="0" stopColor="#a7c4e9" /><stop offset="1" stopColor="#a4c4ea" stopOpacity=".7" />
                      </linearGradient>
                    </defs>
                    <path d="M0 0h275C180 20 80 48 0 101z" fill="#b5cff0" opacity=".3" />
                    <path d="M0 0h240C160 20 70 50 0 82z" fill="url(#sw)" />
                  </Swoosh>
                  <Page>
                    <Line $indent $ws={-1.3}><b>Маркетинг</b> —это социальный и управленческий процесс, с помощью</Line>
                    <Line>которого отдельные лица и группы лиц удовлетворяют свои нужды и</Line>
                    <Line>потребности благодаря созданию товаров, обладающих потребительской</Line>
                    <Line $end>ценностью и обмена ими.</Line>
                    <Line $indent $ws={-1.6}><b>Цель маркетинга</b> — привлекать новых клиентов, обещая им высшую,</Line>
                    <Line $end $ws={-0.9}>и сохранять старых клиентов, постоянно удовлетворяя их меняющиеся.</Line>
                    <Line $indent><b>Основная задача маркетинга</b>&#8201;— понять нужды и потребности</Line>
                    <Line>каждого рынка и выбрать те из них, которые их компания может</Line>
                    <Line>обслуживать лучше других. Это позволит компании производить товары</Line>
                    <Line>более высокого качества и тем самым увеличивать объемы продаж и</Line>
                    <Line>повышать свои доходы путем лучшего удовлетворения потребностей</Line>
                    <Line $end>целевых покупателей.</Line>
                    <Line $indent $ws={-1.5}>Маркетинг начинается еще задолго до того, как у компании появляется</Line>
                    <Line>готовый продукт. Маркетинг начинается с того, что менеджеры</Line>
                    <Line>выявляют&#8201;людей, вычисляют их интенсивность и объем, определяют</Line>
                    <Line>возможности компании по их удовлетворению. <Misspelt>Маркетологи</Misspelt> продолжают</Line>
                    <Line>работать над товаром на протяжении всего его жизненного цикла. Они</Line>
                    <Line>пытаются найти новых потребителей и удержать уже существующих,</Line>
                    <Line $ws={-1.5}>улучшая потребительские свойства товара и используя для этой цели отчеты</Line>
                    <Line>о продажи и обратную связь. Если специалист по маркетингу хорошо</Line>
                    <Line>потрудился — правильно понял потребности клиента, создал товар,</Line>
                    <Line $ws={-1.7}>отвечающий требованиям покупателей, назначил разумную цену, правильно</Line>
                    <Line $ws={-0.5}>распространил товар и провел рекламную компанию, то продавать такой</Line>
                    <Line $end>товар будет очень легко.</Line>
                  </Page>
                </Stage>
              </Desk>
            </Canvas>
            <Scrollbar>
              <ScrollTop>
                <svg width="9" height="2"><rect width="9" height="2" fill="#2f456f" /></svg>
                <svg width="12" height="12" viewBox="0 0 12 12"><path d="M.5 2.500h10v8H.5z" fill="#eef3fb" stroke="#4d5f86" /><path d="M2 5l2-2M6 6.500h3.500V9" stroke="#4d5f86" fill="none" /><circle cx="5" cy="7" r="2" fill="#c9d6ec" stroke="#4d5f86" /></svg>
              </ScrollTop>
              <Track>
                <svg width="7" height="4"><path d="M0 4h7L3.500 0z" fill="#4a6798" /></svg>
                <Thumb>
                  <svg width="7" height="8"><path d="M0 .5h7M0 3h7M0 5.500h7" stroke="#7f96bd" /></svg>
                </Thumb>
                <svg width="7" height="4"><path d="M0 0h7L3.500 4z" fill="#3f5c90" /></svg>
              </Track>
              <Browse>
                <svg width="6" height="6"><path d="M0 3h6L3 0zM0 6h6L3 3z" fill="#141b2c" /></svg>
                <svg width="8" height="8"><circle cx="4" cy="4" r="2.800" fill="#c9d6ea" stroke="#20283c" strokeWidth="1.200" /></svg>
                <svg width="6" height="6"><path d="M0 0h6L3 3zM0 3h6L3 6z" fill="#141b2c" /></svg>
              </Browse>
            </Scrollbar>
            <Patch />
          </Work>

          <Status>
            <StatusCell $w={93}>Страница: 1 из 1</StatusCell>
            <StatusCell $w={91}>Число слов: 187</StatusCell>
            <ProofSlot>
              <svg width="15" height="14" viewBox="0 0 15 14">
                <path d="M1 8l5-3 7 2-5 4.500z" fill="#f3f6fc" stroke="#5470ab" /><path d="M1 9.500l7 3.500 5-4.500" fill="none" stroke="#3d5a9b" strokeWidth="1.300" />
                <path d="M7 1l6 6M13 1L8 7.500" stroke="#d43a2f" strokeWidth="1.700" />
              </svg>
            </ProofSlot>
            <Language>Русский (Россия)</Language>
            <StatusRight>
              <Views>
                <View $on><svg width="11" height="11"><path d="M.5 .5h10v10H.5z" fill="#fffbe8" stroke="#55492c" /><path d="M2 3h7M2 5h7M2 7h7" stroke="#55492c" strokeWidth=".8" /></svg></View>
                <View><svg width="11" height="11"><path d="M.5 1.500l5 1.500 5-1.500v7.500l-5 1.500-5-1.500zM5.500 3v7.500M2 4l2 .5M2 6l2 .5M7 4.500l2-.5M7 6.500l2-.5" fill="#f3f6fb" stroke="#3f4c68" strokeWidth=".9" /></svg></View>
                <View><svg width="11" height="11"><path d="M.5 .5h8v8h-8z" fill="#f3f6fb" stroke="#4c5a78" /><path d="M2 3h5M2 5h5" stroke="#4c5a78" strokeWidth=".8" /><circle cx="8" cy="8" r="2.700" fill="#2e8d78" /></svg></View>
                <View><svg width="11" height="11"><path d="M0 1.500h8M3 4h7M3 6.500h7M1 9.500h8" stroke="#7a869e" /></svg></View>
                <View><svg width="11" height="11"><path d="M0 1.500h10M0 4h10M0 6.500h10M0 9h10" stroke="#626d86" /></svg></View>
              </Views>
              <Zoom>70%</Zoom>
              <svg width="122" height="17" viewBox="0 0 122 17">
                <path d="M15 8.500h92" stroke="#d9e7fb" /><path d="M15 9.500h92" stroke="#7898cc" strokeWidth=".5" />
                <path d="M61.500 5v7" stroke="#e4eefc" />
                {[8, 113].map(cx => <g key={cx}><circle cx={cx} cy="8.500" r="6.500" fill="#edf2fa" stroke="#6c7c9c" /><path d={`M${cx - 3.500} 8.500h7`} stroke="#2d3850" strokeWidth="1.600" /></g>)}
                <path d="M113 5v7" stroke="#2d3850" strokeWidth="1.600" />
                <path d="M42.500 3h7v7L46 13.500 42.500 10z" fill="#dde8f8" stroke="#5f78a8" />
              </svg>
              <SizeGrip width="11" height="11" fill="#4c6ba3"><path d="M8 0h2v2H8zM8 4h2v2H8zM8 8h2v2H8zM4 4h2v2H4zM4 8h2v2H4zM0 8h2v2H0z" /></SizeGrip>
            </StatusRight>
          </Status>
        </Client>
        <OfficeButton><OfficeLogo /></OfficeButton>
      </Window>
    </>
  );
}
